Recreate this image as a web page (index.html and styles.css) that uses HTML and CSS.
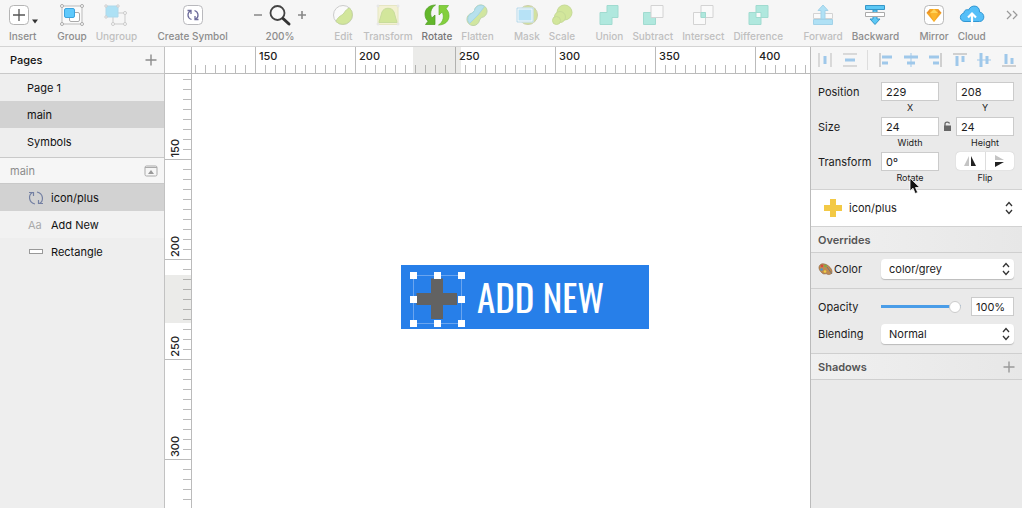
FILE: index.html
```html
<!DOCTYPE html>
<html lang="en">
<head>
<meta charset="utf-8">
<title>Sketch</title>
<link rel="stylesheet" href="styles.css">
</head>
<body>
<div class="app">
  <header class="toolbar">
    <div class="group">
      <button class="tool insert"><svg width="28" height="22" viewBox="0 0 28 22"><rect x=".5" y="1.500" width="19" height="19" rx="4" fill="#fff" stroke="#b5b5b5"/><path d="M10 5v12M4 11h12" stroke="#555" stroke-width="1.300"/><path d="M23 15.500h6l-3 4z" fill="#333"/></svg><span>Insert</span></button>
    </div>
    <div class="group">
      <button class="tool"><svg width="24" height="22" viewBox="0 0 24 22"><path d="M2 2h20v18H2z" fill="#fafafa" stroke="#bbb"/><rect x="9.500" y="8.500" width="10" height="9" rx="1.500" fill="#fff" stroke="#aaa"/><rect x="4.500" y="4.500" width="10" height="9" rx="1.500" fill="#5fc9fb" stroke="#3da4de"/><g fill="#fff" stroke="#aaa"><circle cx="2" cy="2" r="1.500"/><circle cx="22" cy="2" r="1.500"/><circle cx="2" cy="20" r="1.500"/><circle cx="22" cy="20" r="1.500"/></g></svg><span>Group</span></button>
      <button class="tool" disabled><svg width="24" height="22" viewBox="0 0 24 22"><path d="M9 9h12v11H9z" fill="none" stroke="#999"/><path d="M2 2h12v11H2z" fill="#55c9f5" stroke="#5ab6df"/><g fill="#fff" stroke="#999"><circle cx="2" cy="2" r="1.200"/><circle cx="14" cy="2" r="1.200"/><circle cx="2" cy="13" r="1.200"/><circle cx="21" cy="9" r="1.500"/><circle cx="9" cy="20" r="1.500"/><circle cx="21" cy="20" r="1.500"/></g></svg><span>Ungroup</span></button>
    </div>
    <div class="group">
      <button class="tool"><svg width="22" height="22" viewBox="0 0 22 22"><rect x="1.500" y="1.500" width="19" height="19" rx="4" fill="#fff" stroke="#b9b9bd"/><g fill="none" stroke="#6e6c9b" stroke-width="1.300"><path d="M9.500 15.500C5 14 5 8.500 8.500 7M5.500 6.500h3.500V10M12.500 6.500C17 8 17 13.500 13.500 15M16.500 15.500H13V12"/></g></svg><span>Create Symbol</span></button>
    </div>
    <div class="group zoom">
      <button class="tool"><svg width="54" height="22" viewBox="0 0 54 22"><path d="M1 11h8M45 11h8M49 7v8" stroke="#888" stroke-width="1.600"/><circle cx="24.500" cy="9" r="7" fill="#fafafa" stroke="#444" stroke-width="1.800"/><path d="M30 14.500l6 5.500" stroke="#333" stroke-width="3" stroke-linecap="round"/></svg><span>200%</span></button>
    </div>
    <div class="group">
      <button class="tool" disabled><svg width="22" height="22" viewBox="0 0 22 22"><circle cx="11" cy="11" r="9.500" fill="#fff" stroke="#999"/><path d="M17.500 4A9.500 9.500 0 1 1 4 17.500C6 12 10 12 12 9s3-4 5.500-5z" fill="#a8d32e" stroke="#8ab52a"/></svg><span>Edit</span></button>
      <button class="tool" disabled><svg width="24" height="22" viewBox="0 0 24 22"><path d="M2 1.500h20v19H2z" fill="#f0ecaa" stroke="#d3d486"/><path d="M3 18.500L6 8c2-5 10-5 12 0l3 10.500z" fill="#a8d32e" stroke="#91bd30"/><g fill="#fff" stroke="#ccc"><circle cx="2" cy="2" r="1"/><circle cx="22" cy="2" r="1"/><circle cx="2" cy="20" r="1"/><circle cx="22" cy="20" r="1"/></g></svg><span>Transform</span></button>
      <button class="tool dark"><svg width="26" height="22" viewBox="0 0 26 22"><path d="M11.500 1C5 1 1 5 1 10c0 3.500 1.200 5.500 3 7.200L1.500 20.500H11V11L8 13.800C5.500 10.500 6.500 4 11.500 1z" fill="#62b72a" stroke="#4c9c1e" stroke-width=".7"/><path d="M14.500 21c6.500 0 10.500-4 10.500-9 0-3.500-1.200-5.500-3-7.200L24.500 1.500H15V11l3-2.800c2.500 3.300 1.500 9.800-3.500 12.800z" fill="#84cf3d" stroke="#63b82b" stroke-width=".7"/></svg><span>Rotate</span></button>
      <button class="tool" disabled><svg width="22" height="22" viewBox="0 0 22 22"><path d="M8.500 6.500a6.300 6.300 0 1 1 7 7L13.500 16a6.300 6.300 0 1 1-7-7z" fill="#a5d33a" stroke="#7fae4a"/><path d="M8.500 6.500A6.300 6.300 0 0 1 18.500 2.500L12 11l-8.500 8.500A6.300 6.300 0 0 1 6.500 9z" fill="#6cc9e4" stroke="#48adc7"/></svg><span>Flatten</span></button>
    </div>
    <div class="group">
      <button class="tool" disabled><svg width="24" height="22" viewBox="0 0 24 22"><circle cx="13" cy="11" r="9.500" fill="#a8c936" stroke="#9a9f56"/><path d="M2.500 4.500h15v13h-15z" fill="#6bcaf6" stroke="#fff" stroke-width="2"/><path d="M2 4h16v14H2z" fill="none" stroke="#47a6d6" stroke-width=".8"/></svg><span>Mask</span></button>
      <button class="tool" disabled><svg width="22" height="22" viewBox="0 0 22 22"><circle cx="13.500" cy="8.500" r="7.500" fill="#a8d32e" stroke="#8cb925"/><circle cx="9" cy="13" r="5.500" fill="#a8d32e" stroke="#8cb925"/><circle cx="5.500" cy="16.500" r="4" fill="#a8d32e" stroke="#8cb925"/></svg><span>Scale</span></button>
    </div>
    <div class="group">
      <button class="tool" disabled><svg width="22" height="22" viewBox="0 0 22 22"><path d="M9 1.500h11v12h-6v7H2v-12h7z" fill="#5cd9c2" stroke="#3bbba4"/></svg><span>Union</span></button>
      <button class="tool" disabled><svg width="22" height="22" viewBox="0 0 22 22"><path d="M1.500 8.500h12v12h-12z" fill="#5cd9c2" stroke="#3bbba4"/><path d="M9 1.500h12v12H9z" fill="#fff" stroke="#aaa"/></svg><span>Subtract</span></button>
      <button class="tool" disabled><svg width="22" height="22" viewBox="0 0 22 22"><path d="M1.500 8.500h12v12h-12zM9 1.500h12v12H9z" fill="#fff" stroke="#aaa"/><path d="M9 8.500h4.500v5H9z" fill="#5cd9c2" stroke="#3bbba4"/></svg><span>Intersect</span></button>
      <button class="tool" disabled><svg width="22" height="22" viewBox="0 0 22 22"><path d="M9 1.500h12v12h-7v7H2v-12h7z" fill="#5cd9c2" stroke="#3bbba4"/><path d="M9 8.500h5v5H9z" fill="#fff" stroke="#3bbba4"/></svg><span>Difference</span></button>
    </div>
    <div class="group">
      <button class="tool" disabled><svg width="22" height="22" viewBox="0 0 22 22"><path d="M1.500 9.500h19v5h-19z" fill="#fff" stroke="#aaa"/><path d="M1.500 15.500h19v5h-19zM11 1l5 5.500h-3V15H9V6.500H6z" fill="#5cc8f5" stroke="#3ea8d9"/></svg><span>Forward</span></button>
      <button class="tool"><svg width="22" height="22" viewBox="0 0 22 22"><path d="M1.500 1.500h19v4h-19zM9 6h4v9h3l-5 5.500L6 15h3z" fill="#5cc8f5" stroke="#3596c8"/><path d="M1.500 8.500h19v4h-19z" fill="#fff" stroke="#aaa"/></svg><span>Backward</span></button>
    </div>
    <div class="group">
      <button class="tool"><svg width="22" height="22" viewBox="0 0 22 22"><rect x="1.500" y="1.500" width="19" height="19" rx="4" fill="#fff" stroke="#b9b9b9"/><path d="M7 5h8l3.500 4L11 18 3.500 9z" fill="#f5a623"/><path d="M7 5L3.500 9H7zM15 5l3.500 4H15z" fill="#e9912a"/><path d="M7 9h8l-4 9z" fill="#fbb52d"/><path d="M11 5l4 4H7z" fill="#ffd45c"/></svg><span>Mirror</span></button>
      <button class="tool"><svg width="26" height="22" viewBox="0 0 26 22"><path d="M6 17.500C0 17.500 0 10 5 9c0-3 3-4 4.500-3C12 0 21 1 20.500 8c6 1 5.500 9.500 0 9.500z" fill="#55bff8" stroke="#2f96d3"/><path d="M13 22V10M9 13.500l4-4 4 4" fill="none" stroke="#fff" stroke-width="2.200"/></svg><span>Cloud</span></button>
    </div>
    <button class="more" aria-label="More tools"><svg width="12" height="10" viewBox="0 0 12 10"><path d="M1 1l4 4-4 4M7 1l4 4-4 4" fill="none" stroke="#999" stroke-width="1.200"/></svg></button>
  </header>

  <aside class="sidebar">
    <section class="pages">
      <div class="side-head"><h2>Pages</h2><button class="icon-btn" aria-label="Add page"><svg width="12" height="12"><path d="M6 .500v11M.500 6h11" stroke="#8c8c8c" stroke-width="1.400"/></svg></button></div>
      <ul class="list page-list"><li>Page 1</li><li class="selected">main</li><li>Symbols</li></ul>
    </section>
    <section>
      <div class="side-head layer-head"><h2 class="muted">main</h2><button class="icon-btn" aria-label="Collapse layers"><svg width="14" height="12"><rect x="1" y="1" width="12" height="10" rx="1.500" fill="none" stroke="#aaa"/><path d="M1 2.500h12" stroke="#aaa"/><path d="M4 9h6L7 5z" fill="#999"/></svg></button></div>
      <ul class="list layers">
        <li class="selected"><svg class="layer-icon" width="16" height="16" viewBox="0 0 16 16"><path d="M7 14C.5 12.500 0 5 4.500 2.500M1 2.500h4.500V6M9 2c6.500 1.500 7 9 2.500 11.500M15 13.500h-4.500V10" fill="none" stroke="#7480a3" stroke-width="1.200"/></svg>icon/plus</li>
        <li class="hinted"><span class="layer-icon aa">Aa</span>Add New</li>
        <li><svg class="layer-icon" width="16" height="16" viewBox="0 0 16 16"><rect x="1.500" y="5.500" width="13" height="4" fill="#fff" stroke="#999"/></svg>Rectangle</li>
      </ul>
    </section>
  </aside>

  <main class="workspace">
    <div class="corner"></div>
    <div class="ruler-x"><i class="span-x"></i><span>150</span><span>200</span><span>250</span><span>300</span><span>350</span><span>400</span></div>
    <div class="ruler-y"><i class="span-y"></i><div><span>150</span></div><div><span>200</span></div><div><span>250</span></div><div><span>300</span></div></div>
    <div class="canvas">
      <div class="artwork">
        <svg class="selection" width="56" height="56" viewBox="0 0 56 56"><path d="M22 7.500h12V22h14v12H34v14H22V34H7.500V22H22z" fill="#626262"/><path d="M4.500 4.500h48v48h-48z" fill="none" stroke="#6aa5ef"/><path fill="#fff" d="M1 1h7v7H1zM25 1h7v7h-7zM49 1h7v7h-7zM1 25h7v7H1zM49 25h7v7h-7zM1 49h7v7H1zM25 49h7v7h-7zM49 49h7v7h-7z"/></svg>
        <span class="art-text">ADD NEW</span>
      </div>
    </div>
  </main>

  <aside class="inspector">
    <div class="align-bar">
      <button aria-label="Distribute horizontally"><svg width="14" height="14"><path d="M1 0v14M13 0v14" stroke="#bbb"/><path d="M7 3v8" stroke="#9fc8ea" stroke-width="3"/></svg></button>
      <button aria-label="Distribute vertically"><svg width="14" height="14"><path d="M0 1h14M0 13h14" stroke="#bbb"/><path d="M2 7h10" stroke="#9fc8ea" stroke-width="3"/></svg></button>
      <i class="divider"></i>
      <button aria-label="Align left"><svg width="14" height="14"><path d="M1 0v14" stroke="#aaa"/><path d="M3 4h10M3 10h6" stroke="#9fc8ea" stroke-width="3"/></svg></button>
      <button aria-label="Align center"><svg width="14" height="14"><path d="M7 0v14" stroke="#9fc8ea"/><path d="M0 4h14M3 10h8" stroke="#9fc8ea" stroke-width="3"/></svg></button>
      <button aria-label="Align right"><svg width="14" height="14"><path d="M13 0v14" stroke="#aaa"/><path d="M1 4h10M5 10h6" stroke="#9fc8ea" stroke-width="3"/></svg></button>
      <button aria-label="Align top"><svg width="14" height="14"><path d="M0 1h14" stroke="#aaa"/><path d="M4 3v10M10 3v6" stroke="#9fc8ea" stroke-width="3"/></svg></button>
      <button aria-label="Align middle"><svg width="14" height="14"><path d="M0 7h14" stroke="#9fc8ea"/><path d="M4 0v14M10 3v8" stroke="#9fc8ea" stroke-width="3"/></svg></button>
      <button aria-label="Align bottom"><svg width="14" height="14"><path d="M0 13h14" stroke="#aaa"/><path d="M4 1v10M10 5v6" stroke="#9fc8ea" stroke-width="3"/></svg></button>
    </div>

    <section class="geometry">
      <span class="row-label">Position</span>
      <div class="field"><input id="x" value="229"><label for="x">X</label></div><i></i>
      <div class="field"><input id="y" value="208"><label for="y">Y</label></div>
      <span class="row-label">Size</span>
      <div class="field"><input id="w" value="24"><label for="w">Width</label></div>
      <svg class="lock" width="9" height="11" viewBox="0 0 9 11"><path d="M2 5V3c0-2.500 4-2.500 4.500-.5" fill="none" stroke="#666" stroke-width="1.300"/><rect x="1" y="4.500" width="7" height="5.500" fill="#666"/></svg>
      <div class="field"><input id="h" value="24"><label for="h">Height</label></div>
      <span class="row-label">Transform</span>
      <div class="field"><input id="r" value="0º"><label for="r">Rotate</label></div><i></i>
      <div class="field"><div class="flip"><button aria-label="Flip horizontally"><svg width="14" height="12"><path d="M6 1v10H1z" fill="#c4c4c4"/><path d="M8 1v10h5z" fill="#222"/></svg></button><button aria-label="Flip vertically"><svg width="12" height="12"><path d="M1 0v5h9z" fill="#c4c4c4"/><path d="M1 12V7h9z" fill="#222"/></svg></button></div><span class="caption">Flip</span></div>
      <svg class="cursor" width="12" height="18" viewBox="0 0 12 18"><path d="M1 1v13l3-2.800L6.200 16.500l2.500-1L6.500 10.500h4.300z" fill="#111" stroke="#fff" stroke-width=".8"/></svg>
    </section>

    <div class="symbol-row">
      <svg width="20" height="20"><path d="M7 1h6v6h6v6h-6v6H7v-6H1V7h6z" fill="#f3c945"/></svg>
      <div class="select"><select aria-label="Symbol"><option>icon/plus</option></select><svg width="8" height="14"><path d="M1 5l3-3.500L7 5M1 9l3 3.500L7 9" fill="none" stroke="#333" stroke-width="1.300"/></svg></div>
    </div>

    <h3 class="section-head">Overrides</h3>
    <section class="override">
      <label for="color"><svg width="15" height="14" viewBox="0 0 15 14"><path d="M2 3C5-.5 13 4 14 9c.5 4-4 4-5 3s-3 1-5-1S-.500 6 2 3z" fill="#c08a50" stroke="#8a633d" stroke-width=".6"/><path d="M9 5l5 7" stroke="#777"/><circle cx="4" cy="4" r="1.300" fill="#d8483b"/><circle cx="7.500" cy="4" r="1.300" fill="#79ae46"/><circle cx="3.500" cy="7.500" r="1.300" fill="#4796cf"/><circle cx="7" cy="9.500" r="1.300" fill="#eed143"/></svg>Color</label>
      <div class="select boxed"><select id="color"><option>color/grey</option></select><svg width="8" height="14"><path d="M1 5l3-3.500L7 5M1 9l3 3.500L7 9" fill="none" stroke="#333" stroke-width="1.300"/></svg></div>
    </section>
    <section class="style">
      <label for="opacity">Opacity</label>
      <div class="opacity"><input type="range" id="opacity" min="0" max="100" value="100"><input class="percent" aria-label="Opacity percent" value="100%"></div>
      <label for="blend">Blending</label>
      <div class="select boxed"><select id="blend"><option>Normal</option></select><svg width="8" height="14"><path d="M1 5l3-3.500L7 5M1 9l3 3.500L7 9" fill="none" stroke="#333" stroke-width="1.300"/></svg></div>
    </section>
    <div class="section-head"><h3>Shadows</h3><button class="icon-btn" aria-label="Add shadow"><svg width="12" height="12"><path d="M6 .500v11M.500 6h11" stroke="#999" stroke-width="1.400"/></svg></button></div>
  </aside>
</div>
</body>
</html>
```

FILE: styles.css
```css
* { box-sizing: border-box; }
body {
  margin: 0;
  font: 11px/14px Inter, "Liberation Sans", sans-serif;
  color: #1c1c1c;
}
button, input, select { font: inherit; color: inherit; }
button { padding: 0; border: 0; background: none; }
h2, h3 { margin: 0; font: inherit; font-weight: 500; }
ul { margin: 0; padding: 0; list-style: none; }
svg { display: block; flex: none; overflow: visible; }

.app {
  display: grid;
  grid-template: auto 1fr / 165px 1fr 212px;
  height: 100vh;
}

.toolbar {
  grid-column: 1 / -1;
  display: flex;
  justify-content: space-between;
  height: 47px;
  padding: 4px 4px 0 9px;
  background: #f6f6f6;
  border-bottom: 1px solid #d4d4d4;
}
.group { display: flex; gap: 9px; }
.zoom { padding: 0 5px; }
.tool {
  display: flex;
  flex-direction: column;
  align-items: center;
  gap: 3px;
  height: 40px;
  color: #8c8c8c;
  font-size: 10px;
  font-weight: 500;
  white-space: nowrap;
}
.insert svg { align-self: flex-start; }
.insert { align-items: flex-start; }
.tool:disabled { color: #bfbfbf; }
.tool:disabled svg { opacity: .45; }
.tool.dark { color: #777; }
.more { height: 22px; }

.sidebar { background: #eee; border-right: 1px solid #c2c2c2; }
.side-head {
  display: flex;
  align-items: center;
  justify-content: space-between;
  height: 27px;
  padding: 0 7px 0 10px;
  background: #f6f6f6;
  border-bottom: 1px solid #c9c9c9;
}
.side-head h2 { color: #111; }
.side-head .muted { color: #8c8c8c; font-weight: 400; }
.icon-btn { display: flex; }
.side-head.layer-head { height: 26px; padding-right: 6px; }
.pages { border-bottom: 1px solid #c9c9c9; }
.page-list { padding-bottom: 2px; }
.list li {
  display: flex;
  align-items: center;
  gap: 7px;
  height: 27px;
  padding-left: 28px;
  color: #111;
}
.list.page-list li { padding-left: 27px; }
.list .selected { background: #d2d2d2; }
.list .hinted { background: #f2f2f2; }
.layer-icon { width: 16px; }
.aa { color: #aaa; }

.workspace {
  display: grid;
  grid-template: 27px 1fr / 27px 1fr;
  min-width: 0;
  min-height: 0;
  overflow: hidden;
  background: #fff;
}
.corner { border-right: 1px solid #bbb; border-bottom: 1px solid #bbb; }
.ruler-x, .ruler-y { position: relative; display: flex; overflow: hidden; font-weight: 500; color: #222; }
.ruler-x {
  padding-left: 63px;
  border-bottom: 1px solid #bbb;
  background: repeating-linear-gradient(90deg, #bbb 0 1px, transparent 1px 10px) 3px bottom / 100% 8px no-repeat;
}
.ruler-x span { flex: 0 0 100px; padding: 2px 0 0 3px; border-left: 1px solid #bbb; }
.ruler-y {
  flex-direction: column;
  border-right: 1px solid #bbb;
  background: repeating-linear-gradient(180deg, #bbb 0 1px, transparent 1px 10px) right 5px / 8px 100% no-repeat;
}
.ruler-y div {
  display: flex;
  align-items: flex-end;
  flex: 0 0 100px;
  padding: 0 0 2px 3px;
  border-bottom: 1px solid #bbb;
}
.ruler-y div:nth-child(2) { flex-basis: 86px; }
.ruler-y span { writing-mode: vertical-rl; transform: rotate(180deg); }
.span-x, .span-y { position: absolute; background: rgba(120, 120, 110, .15); }
.span-x { left: 221px; top: 0; width: 48px; height: 26px; }
.span-y { top: 201px; left: 0; width: 26px; height: 48px; }

.canvas { position: relative; }
.artwork {
  position: absolute;
  left: 209px;
  top: 191px;
  display: flex;
  align-items: center;
  gap: 12px;
  width: 248px;
  height: 64px;
  padding-left: 8px;
  background: #277fe9;
}
.selection { margin-top: 4px; }
.art-text {
  font: 37px/40px "Oswald", "Roboto Condensed", "Liberation Sans Narrow", Roboto, sans-serif;
  color: #fff;
  white-space: nowrap;
}

.inspector { background: #eaeaea; border-left: 1px solid #bbb; }
.align-bar {
  display: flex;
  align-items: center;
  justify-content: space-between;
  height: 27px;
  padding: 0 6px 0 7px;
  background: #f6f6f6;
  border-bottom: 1px solid #c4c4c4;
}
.divider { width: 1px; height: 20px; background: #ddd; }
.geometry {
  position: relative;
  display: grid;
  grid-template-columns: 63px 1fr 17px 1fr;
  grid-auto-rows: 35px;
  padding: 8px 8px 2px 7px;
  border-bottom: 1px solid #d2d2d2;
}
.row-label { padding-top: 3px; }
.field { display: flex; flex-direction: column; align-items: center; font-size: 9px; }
.field input, .percent {
  width: 100%;
  height: 19px;
  padding: 0 4px;
  border: 1px solid #cbcbcb;
  border-radius: 0;
  background: #fff;
  font-size: 11px;
}
.lock { margin: 4px 0 0 4px; }
.flip {
  display: flex;
  width: 100%;
  height: 18px;
  margin-bottom: 1px;
  background: #fff;
  border-radius: 4px;
  box-shadow: 0 0 1px #aaa;
}
.flip button { flex: 1; display: grid; place-items: center; }
.flip button + button { border-left: 1px solid #ddd; }
.cursor { position: absolute; left: 98px; top: 103px; }

.symbol-row {
  display: flex;
  align-items: center;
  gap: 6px;
  height: 37px;
  padding: 0 5px 0 12px;
  background: #fff;
  border-bottom: 1px solid #d2d2d2;
}
.select { position: relative; flex: 1; display: flex; align-items: center; }
.select select { appearance: none; width: 100%; border: 0; padding: 0; background: none; }
.select svg { position: absolute; right: 4px; pointer-events: none; }
.symbol-row .select svg { right: 4px; }
.boxed { height: 20px; background: #fff; border-radius: 4px; box-shadow: 0 1px 1px #bbb; }
.boxed select { padding-left: 8px; height: 20px; }

.section-head {
  display: flex;
  align-items: center;
  justify-content: space-between;
  height: 26px;
  padding: 0 7px;
  background: linear-gradient(90deg, #f0f0f0, #e7e7e7);
  border-bottom: 1px solid #cfcfcf;
  color: #555;
  font-weight: 600;
}
.section-head h3 { font-weight: 600; }
.override, .style {
  display: grid;
  grid-template-columns: 63px minmax(0, 1fr);
  align-items: center;
  padding: 0 8px 0 7px;
  border-bottom: 1px solid #cfcfcf;
}
.override { height: 36px; padding-bottom: 3px; }
.override label { display: flex; align-items: center; gap: 1px; }
.style { grid-auto-rows: 27px; padding-top: 4px; padding-bottom: 6px; }
.opacity { display: flex; align-items: center; gap: 10px; }
.opacity [type=range] {
  appearance: none;
  flex: 1;
  min-width: 0;
  height: 14px;
  margin: 0;
  background: linear-gradient(#4a9de8, #4a9de8) center / 100% 3px no-repeat;
}
.opacity [type=range]::-webkit-slider-thumb {
  appearance: none;
  width: 12px;
  height: 12px;
  border: 1px solid #ccc;
  border-radius: 50%;
  background: #fff;
}
.opacity .percent { flex: 0 0 43px; width: 43px; }
```
